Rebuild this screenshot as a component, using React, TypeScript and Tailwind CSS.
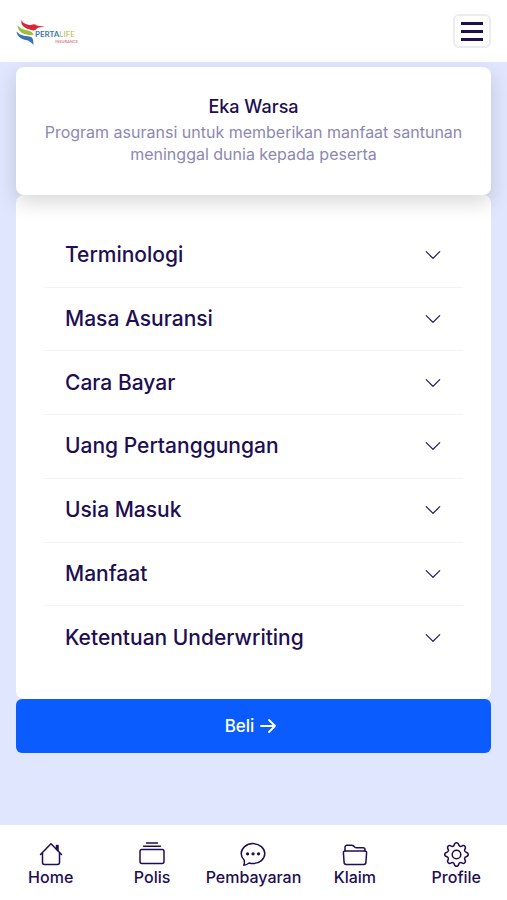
import { useState } from 'react';
import type { ReactNode } from 'react';
import { BsChevronDown, BsGear } from 'react-icons/bs';

const topics = [
  'Terminologi',
  'Masa Asuransi',
  'Cara Bayar',
  'Uang Pertanggungan',
  'Usia Masuk',
  'Manfaat',
  'Ketentuan Underwriting',
];

function Logo() {
  return (
    <a href="#" aria-label="Pertalife Insurance" className="block">
      <svg width="62" height="28" viewBox="0 0 62 28" fontFamily="Lato, sans-serif">
        <path d="M5.500 2.800c1 3.500 4 4.200 7.500 5.200 2 .4 3-.8 5-.8 1.800 0 2.500 1.200 4 1.600l7 .9c-4 .2-6.500.4-8 1.800-1.500 2-3.500 2.500-6 1.500C10 11.500 4 9.500 5.500 2.800z" fill="#d92736" />
        <path d="M1.500 7.500c2 4.200 6 5 10.500 6 3 .7 5 2 5.500 4.500C10 18.300 1.500 16.500 1.500 7.500z" fill="#9bc13c" />
        <path d="M.5 14.500c3.500 4 8 4.500 12.500 5 3 .3 4.500 1.500 4.500 8.200-2-1.400-3-3.200-5.500-4.200C6 22.500 1 20 .5 14.500z" fill="#3c6fb6" />
        <text x="19" y="20" fontSize="8" fontWeight="700" fill="#3f78b5">
          PERTA<tspan fontWeight="400" fill="#b5bb45">LIFE</tspan>
        </text>
        <text x="39" y="26" fontSize="4" fontWeight="700" fill="#d7879c">INSURANCE</text>
      </svg>
    </a>
  );
}

function Icon({ children }: { children: ReactNode }) {
  return (
    <svg
      width="26"
      height="26"
      viewBox="0 0 26 26"
      fill="none"
      stroke="currentColor"
      strokeWidth="1.5"
      strokeLinecap="round"
      strokeLinejoin="round"
      aria-hidden="true"
    >
      {children}
    </svg>
  );
}

const links = [
  {
    label: 'Home',
    icon: (
      <Icon>
        <path d="M2.500 13.500 13 2.800l10.500 10.700M4.500 12v9.500a2 2 0 0 0 2 2h13a2 2 0 0 0 2-2V12" />
        <path d="M18.500 4.500H20v5l-1.500-1.300z" fill="currentColor" />
      </Icon>
    ),
  },
  {
    label: 'Polis',
    icon: (
      <Icon>
        <rect x="1" y="8.500" width="24" height="14" rx="2" />
        <path d="M4.500 5.200h17M7.500 2h11" />
      </Icon>
    ),
  },
  {
    label: 'Pembayaran',
    icon: (
      <Icon>
        <path d="M3.800 24.200c.6-1.400.8-3.400.3-5.200A8.800 8.800 0 0 1 1.200 12.600C1.200 7.200 6.400 2.600 13 2.600s11.800 4.600 11.800 10S19.600 22.600 13 22.600c-1.400 0-2.700-.2-3.900-.6-1.500 1.200-3.300 2-5.300 2.200z" />
        <path d="M7.500 12.800h.1M13 12.800h.1M18.500 12.800h.1" strokeWidth="3.200" />
      </Icon>
    ),
  },
  {
    label: 'Klaim',
    icon: (
      <Icon>
        <path d="M3 10V6.200a2 2 0 0 1 2-2h4.600c.8 0 1.500.3 2.100.9l.9.900c.5.500 1.200.8 2 .8H21a2 2 0 0 1 2 2V10" />
        <path d="M3 10h20a1.600 1.600 0 0 1 1.600 1.700l-.7 9.700a2.100 2.100 0 0 1-2.100 2H4.200a2.100 2.100 0 0 1-2.100-2l-.7-9.700A1.600 1.600 0 0 1 3 10z" />
      </Icon>
    ),
  },
  { label: 'Profile', icon: <BsGear size={25} aria-hidden="true" /> },
];

export default function App() {
  const [open, setOpen] = useState<string | null>(null);

  return (
    <div className="flex min-h-screen flex-col bg-[#e0e6fd] font-[Inter,sans-serif] text-[#200e52]">
      <header className="flex h-[62px] items-center justify-between bg-white px-4">
        <Logo />
        <button
          type="button"
          aria-label="Menu"
          className="flex h-[34px] w-[38px] flex-col items-center justify-center gap-[5px] rounded-md border-2 border-[#ececee] bg-white"
        >
          <span className="h-[3px] w-[22px] bg-[#200e52]" />
          <span className="h-[3px] w-[22px] bg-[#200e52]" />
          <span className="h-[3px] w-[22px] bg-[#200e52]" />
        </button>
      </header>

      <main className="flex flex-1 flex-col px-4 pt-[5px] pb-[72px]">
        <section className="relative rounded-lg bg-white px-6 pt-7 pb-[30px] text-center shadow-[0_8px_20px_rgba(0,0,0,0.15)]">
          <h1 className="text-[18px] leading-6 font-medium">Eka Warsa</h1>
          <p className="mt-[2px] text-[16px] leading-[22px] text-[#8c88b3]">
            Program asuransi untuk memberikan manfaat santunan meninggal dunia kepada peserta
          </p>
        </section>

        <section className="rounded-lg bg-white px-7 pt-[29px] pb-[29px]">
          <div className="grid min-h-[446px] auto-rows-fr divide-y divide-[#f3f3f5]">
            {topics.map((topic) => (
              <button
                key={topic}
                type="button"
                aria-expanded={open === topic}
                onClick={() => setOpen(open === topic ? null : topic)}
                className="flex items-center justify-between px-[21px] text-left text-[21px] leading-6 font-medium"
              >
                {topic}
                <BsChevronDown size={18} aria-hidden="true" />
              </button>
            ))}
          </div>
        </section>

        <button
          type="button"
          className="flex h-[54px] items-center justify-center gap-[6px] rounded-md bg-[#0b5cff] pr-[6px] text-[17px] leading-6 font-medium text-white"
        >
          Beli
          <svg width="16" height="16" viewBox="0 0 16 16" fill="none" stroke="currentColor" strokeWidth="1.8" strokeLinecap="round" strokeLinejoin="round" aria-hidden="true">
            <path d="M1 8h14M9 2l6 6-6 6" />
          </svg>
        </button>
      </main>

      <nav className="grid grid-cols-5 bg-white pt-4 pb-3">
        {links.map(({ label, icon }) => (
          <a key={label} href="#" className="flex flex-col items-center text-[16px] leading-[21px] font-medium">
            <span className="flex h-[26px] items-center">{icon}</span>
            {label}
          </a>
        ))}
      </nav>
    </div>
  );
}
